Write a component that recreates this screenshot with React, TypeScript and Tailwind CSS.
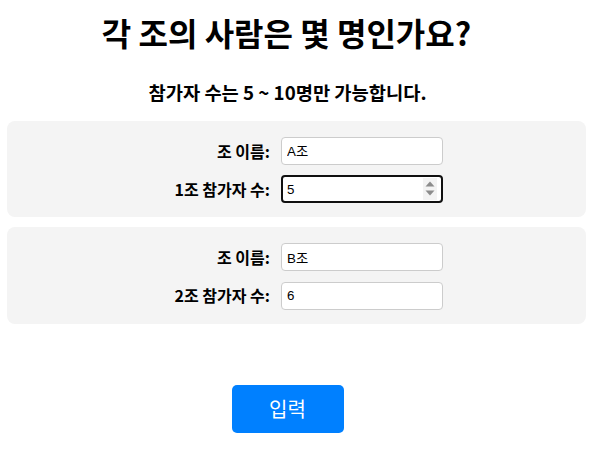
import React, { useState } from 'react';

type Team = { name: string; count: string };

const inputBase =
  "w-[162px] h-[28px] bg-white rounded-[4px] text-[13.33px] font-['Liberation_Sans','Noto_Sans_CJK_KR',sans-serif] outline-none [appearance:textfield] [&::-webkit-inner-spin-button]:appearance-none [&::-webkit-outer-spin-button]:appearance-none";

export default function App() {
  const [teams, setTeams] = useState<Team[]>([
    { name: 'A조', count: '5' },
    { name: 'B조', count: '6' },
  ]);

  const update = (i: number, key: keyof Team, value: string) => {
    setTeams(prev => prev.map((t, idx) => (idx === i ? { ...t, [key]: value } : t)));
  };

  return (
    <div className="w-[599px] min-h-[463px] bg-white font-['Noto_Sans_CJK_KR',sans-serif] text-black">
      <div className="pl-[7px] pr-[13px]">
        <h1 className="text-center text-[32px] font-bold leading-none pt-[16px] pr-[20px]">
          각 조의 사람은 몇 명인가요?
        </h1>
        <p className="text-center text-[18.72px] font-bold leading-none mt-[35px] pr-[18px]">
          참가자 수는 5 ~ 10명만 가능합니다.
        </p>

        <div className="mt-[19px] flex flex-col gap-[10px]">
          {teams.map((team, i) => (
            <div key={i} className="bg-[#f4f4f4] rounded-[8px] pt-[16px] pb-[14px] flex flex-col gap-[10px]">
              <div className="flex items-center">
                <label className="w-[274px] text-right text-[16px] font-bold pr-[11px]">조 이름:</label>
                <input
                  value={team.name}
                  onChange={e => update(i, 'name', e.target.value)}
                  className={`${inputBase} border border-[#cccccc] px-[5px]`}
                />
              </div>
              <div className="flex items-center">
                <label className="w-[274px] text-right text-[16px] font-bold pr-[11px]">{i + 1}조 참가자 수:</label>
                <div className="relative">
                  <input
                    type="number"
                    min={5}
                    max={10}
                    value={team.count}
                    onChange={e => update(i, 'count', e.target.value)}
                    className={
                      i === 0
                        ? `${inputBase} border-2 border-[#101010] px-[4px]`
                        : `${inputBase} border border-[#cccccc] px-[5px]`
                    }
                  />
                  {i === 0 && (
                    <svg
                      className="absolute right-[6px] top-[3px] pointer-events-none"
                      width="14"
                      height="22"
                      viewBox="0 0 14 22"
                    >
                      <rect x="0" y="0" width="14" height="22" fill="#f3f3f3" />
                      <path d="M2.5 8.5 L7 3.5 L11.5 8.5 Z" fill="#8c8c8c" />
                      <path d="M2.5 12.5 L7 17.5 L11.5 12.5 Z" fill="#8c8c8c" />
                    </svg>
                  )}
                </div>
              </div>
            </div>
          ))}
        </div>

        <div className="flex justify-center mt-[61px] pr-[18px]">
          <button className="w-[112px] h-[48px] bg-[#0080ff] text-white text-[20px] rounded-[5px]">
            입력
          </button>
        </div>
      </div>
    </div>
  );
}
